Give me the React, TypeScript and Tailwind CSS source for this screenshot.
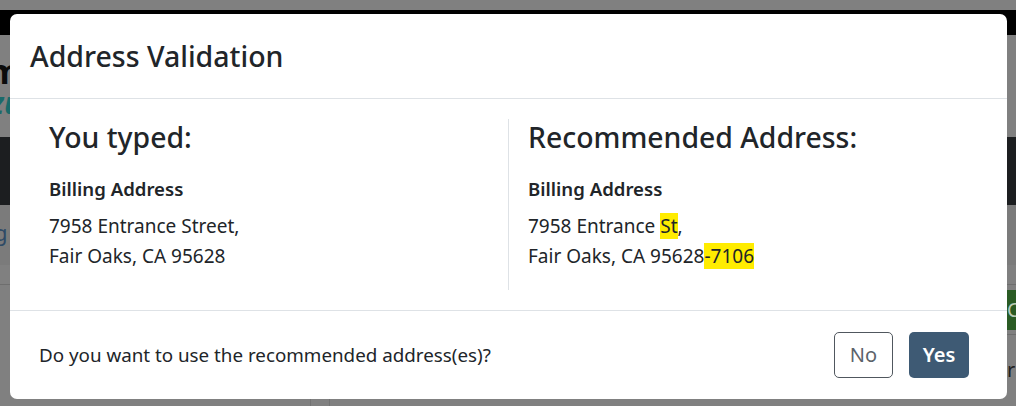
import React from "react";

const font = { fontFamily: '"Noto Sans", "Open Sans", sans-serif' };

export default function App() {
  return (
    <div className="relative w-[1016px] h-[406px] overflow-hidden bg-[#808080]" style={font}>
      {/* background page (seen through the backdrop) */}
      <div className="flex flex-col w-full h-full">
        <div className="h-[10px] bg-[#808080]" />
        <div className="h-[25px] bg-black" />
        <div className="h-[102px] bg-[#808080] flex flex-col justify-center">
          <div className="ml-[-12px] text-[34px] leading-[34px] font-bold text-[#0b0b0b]">m.</div>
          <div className="ml-[-10px] text-[30px] leading-[30px] italic font-bold text-[#1a6a6a]">zu</div>
        </div>
        <div className="h-[68px] bg-[#1c1e20]" />
        <div className="h-[60px] bg-[#7b7b7b] flex items-center pb-[6px]">
          <span className="ml-[-6px] text-[22px] text-[#2e4a66]">g</span>
        </div>
        <div className="h-[20px] bg-[#808080] border-b border-[#6e6e6e]" />
        <div className="flex-1 bg-[#808080] flex">
          <div className="w-[311px] border-r border-[#727272]" />
          <div className="w-[19px] border-r border-[#727272]" />
          <div className="flex-1 flex flex-col items-end">
            <div className="h-[5px]" />
            <div className="w-[9px] h-[40px] bg-[#2a5b24] text-[#b9c9b5] text-[20px] leading-[40px] overflow-hidden">C</div>
            <div className="w-[9px] h-[1px] bg-[#6e6e6e] mt-[4px]" />
            <div className="w-[9px] text-[20px] leading-[30px] mt-[20px] text-[#202020] overflow-hidden">r</div>
          </div>
        </div>
      </div>

      {/* modal */}
      <div className="absolute left-[10px] top-[14px] w-[997px] h-[385px] bg-white rounded-[7px] flex flex-col text-[#212529]">
        <div className="h-[85px] border-b border-[#dee2e6] flex items-center px-[20px]">
          <h5 className="text-[28.5px] leading-[34px] font-medium">Address Validation</h5>
        </div>
        <div className="h-[211px] p-[20px] flex">
          <div className="flex-1 px-[19px] flex flex-col">
            <Column heading="You typed:" line1={<>7958 Entrance Street,</>} line2={<>Fair Oaks, CA 95628</>} />
          </div>
          <div className="flex-1 px-[19px] border-l border-[#dee2e6] flex flex-col">
            <Column
              heading="Recommended Address:"
              line1={<>7958 Entrance <mark className="bg-[#ffec00] text-[#212529]">St</mark>,</>}
              line2={<>Fair Oaks, CA 95628<mark className="bg-[#ffec00] text-[#212529]">-7106</mark></>}
            />
          </div>
        </div>
        <div className="flex-1 border-t border-[#dee2e6] flex items-center pl-[29px] pr-[38px]">
          <p className="flex-1 text-[18.8px] leading-[30px]">Do you want to use the recommended address(es)?</p>
          <div className="flex gap-[16px]">
            <button className="w-[59px] h-[46px] rounded-[5px] border border-[#50575e] text-[#5c636a] text-[20px] bg-white">No</button>
            <button className="w-[60px] h-[46px] rounded-[5px] bg-[#3e5a74] text-white text-[20px] font-semibold">Yes</button>
          </div>
        </div>
      </div>
    </div>
  );
}

function Column({ heading, line1, line2 }: { heading: string; line1: React.ReactNode; line2: React.ReactNode }) {
  return (
    <>
      <h3 className="text-[28.4px] leading-[36px] font-medium">{heading}</h3>
      <div className="mt-[20px] text-[18.6px] leading-[28px] font-semibold">Billing Address</div>
      <div className="mt-[8px] text-[19px] leading-[30px]">{line1}</div>
      <div className="text-[19px] leading-[30px]">{line2}</div>
    </>
  );
}
